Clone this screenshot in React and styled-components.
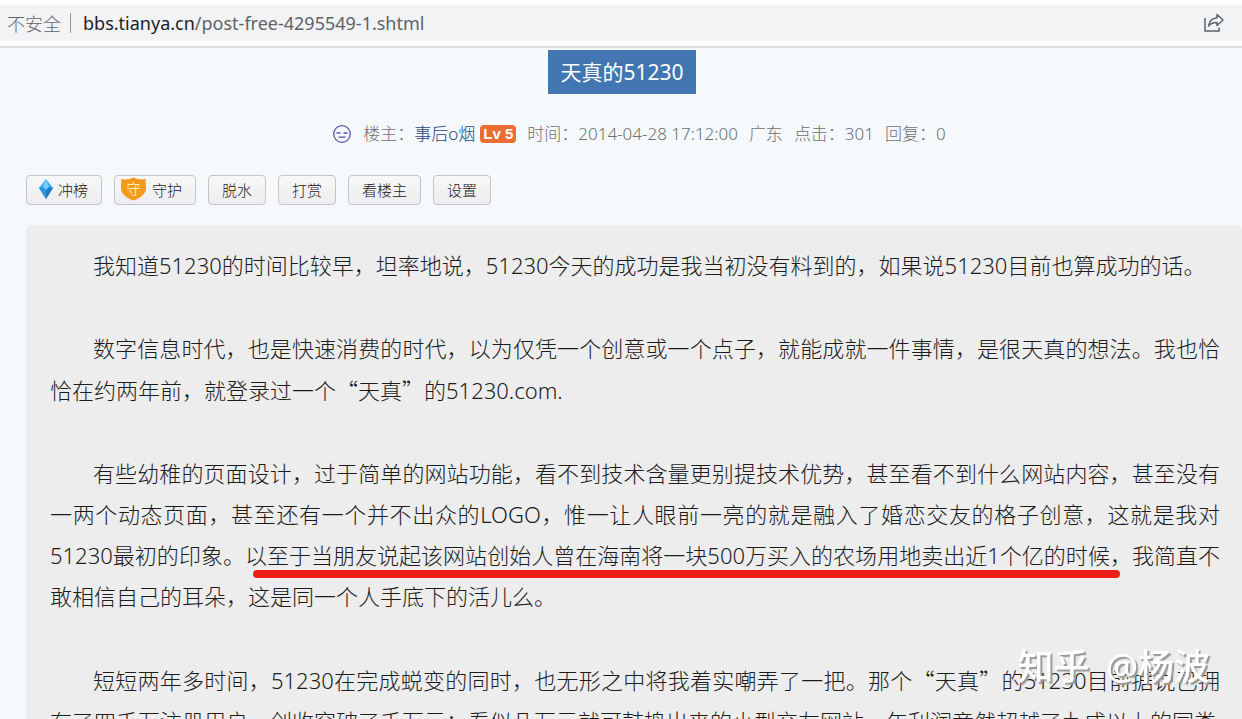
import styled, { createGlobalStyle } from 'styled-components';

const App = () => {
    return (
        <>
            <GlobalStyle />
            <AddressBar>
                <Security>不安全</Security>
                <Divider />
                <Url href='#'>
                    <Host>bbs.tianya.cn</Host>/post-free-4295549-1.shtml
                </Url>
                <ShareBtn aria-label='分享'>
                    <ShareIcon />
                </ShareBtn>
            </AddressBar>

            <Main>
                <Title>天真的51230</Title>

                <PostInfo>
                    <FaceIcon />
                    <Author>
                        楼主：<AuthorLink href='#'>事后o烟</AuthorLink>
                        <Level>Lv 5</Level>
                    </Author>
                    <span>时间：2014-04-28 17:12:00</span>
                    <span>广东</span>
                    <span>点击：301</span>
                    <span>回复：0</span>
                </PostInfo>

                <Toolbar>
                    <ToolBtn $left={12}>
                        <DiamondIcon />
                        冲榜
                    </ToolBtn>
                    <ToolBtn $left={5}>
                        <ShieldIcon />
                        守护
                    </ToolBtn>
                    <ToolBtn>脱水</ToolBtn>
                    <ToolBtn>打赏</ToolBtn>
                    <ToolBtn>看楼主</ToolBtn>
                    <ToolBtn>设置</ToolBtn>
                </Toolbar>

                <Post>
                    <Paragraph>
                        我知道51230的时间比较早，坦率地说，51230今天的成功是我当初没有料到的，如果说51230目前也算成功的话。
                    </Paragraph>
                    <Paragraph>
                        数字信息时代，也是快速消费的时代，以为仅凭一个创意或一个点子，就能成就一件事情，是很天真的想法。我也恰恰在约两年前，就登录过一个<Quote>“天真”</Quote>的51230.com.
                    </Paragraph>
                    <Paragraph>
                        有些幼稚的页面设计，过于简单的网站功能，看不到技术含量更别提技术优势，甚至看不到什么网站内容，甚至没有一两个动态页面，甚至还有一个并不出众的LOGO，惟一让人眼前一亮的就是融入了婚恋交友的格子创意，这就是我对51230最初的印象。
                        <Marked>以至于当朋友说起该网站创始人曾在海南将一块500万买入的农场用地卖出近1个亿的时候，</Marked>
                        我简直不敢相信自己的耳朵，这是同一个人手底下的活儿么。
                    </Paragraph>
                    <Paragraph>
                        短短两年多时间，51230在完成蜕变的同时，也无形之中将我着实嘲弄了一把。那个<Quote>“天真”</Quote>的51230目前据说已拥有了四千万注册用户，创收突破了千万元；看似几万元就可鼓捣出来的小型交友网站，年利润竟然超越了九成以上的同类
                    </Paragraph>
                </Post>
            </Main>

            <Watermark>
                <span>知乎</span>
                <span>@杨波</span>
            </Watermark>
        </>
    );
};

export default App;

const ShareIcon = () => (
    <svg width='22' height='20' viewBox='0 0 22 20' fill='none' stroke='#5f6368' strokeWidth='1.5'>
        <path d='M2 5V18H16V14.5' />
        <path d='M14 1.5L20 7L14 12.5V9.5C10.5 9.3 8 10.3 5.5 13C6.2 8.5 9 5.3 14 4.7Z' strokeLinejoin='round' />
    </svg>
);

const FaceIcon = () => (
    <svg width='20' height='20' viewBox='0 0 20 20' fill='none' stroke='#5753ab' strokeWidth='1.3'>
        <circle cx='10' cy='10' r='8.3' />
        <path d='M4.5 9H8.5M11.5 9H15.5M6.5 13.2H13.5' />
    </svg>
);

const DiamondIcon = () => (
    <svg width='14' height='20' viewBox='0 0 14 20'>
        <path d='M7 0L14 9L7 20L0 9Z' fill='#3aaeee' />
        <path d='M7 0L10 8L7 11L4 8Z' fill='#74cdf8' />
        <path d='M0 9L4 8L7 11V20Z' fill='#2c93dc' />
        <path d='M14 9L10 8L7 11V20Z' fill='#1d7bc8' />
    </svg>
);

const ShieldIcon = () => (
    <svg width='27' height='24' viewBox='0 0 27 24'>
        <path
            d='M13.5 0.5C10 2.5 5 3 1 2C2 5 0.5 8 1 12C1.7 18 8 21.5 13.5 23.5C19 21.5 25.3 18 26 12C26.5 8 25 5 26 2C22 3 17 2.5 13.5 0.5Z'
            fill='#f39a1d'
        />
        <ShieldText x='13.5' y='17' textAnchor='middle'>
            守
        </ShieldText>
    </svg>
);

const GlobalStyle = createGlobalStyle`
    html {
        scrollbar-width: none;
    }

    body {
        margin: 0;
        height: 100vh;
        overflow: hidden;
        background: #f5f9fb;
        font-family: 'Noto Sans', 'Noto Sans CJK SC', sans-serif;
    }
`;

const AddressBar = styled.header`
    display: flex;
    align-items: center;
    height: 36px;
    padding: 0 17px 0 7px;
    border-top: 5px solid #fdfdfe;
    background: #f1f3f4;
    box-shadow: 0 5px 0 #fdfdfe, 0 7px 0 #dedfe2;
    font-size: 18px;
    color: #5f6368;
`;

const Security = styled.span`
    font-weight: 300;
`;

const Divider = styled.span`
    width: 1px;
    height: 20px;
    margin: 0 12px 0 9px;
    background: #94979b;
`;

const Url = styled.a`
    flex: 1;
    color: #5f6368;
    text-decoration: none;
`;

const Host = styled.span`
    color: #202124;
`;

const ShareBtn = styled.button`
    display: flex;
    padding: 0;
    border: none;
    background: none;
`;

const Main = styled.main`
    display: flex;
    flex-direction: column;
    margin-top: 9px;
    padding-left: 26px;
`;

const Title = styled.h1`
    align-self: center;
    margin: 0 24px 0 0;
    padding: 0 12px;
    background: #4276b0;
    color: #fff;
    font-size: 21px;
    font-weight: 400;
    line-height: 44px;
`;

const PostInfo = styled.div`
    display: flex;
    justify-content: center;
    align-items: center;
    gap: 11px;
    margin-top: 28px;
    padding-left: 10px;
    color: #707070;
    font-size: 17px;
    font-weight: 300;
    line-height: 24px;
`;

const Author = styled.span`
    display: flex;
    align-items: center;
`;

const AuthorLink = styled.a`
    color: #1f477d;
    text-decoration: none;
`;

const Level = styled.span`
    margin-left: 5px;
    padding: 0 3px;
    border-radius: 4px;
    background: #ec6d32;
    color: #fff;
    font-family: 'Liberation Sans', sans-serif;
    font-size: 15px;
    font-weight: 700;
    line-height: 18px;
`;

const Toolbar = styled.div`
    display: flex;
    gap: 12px;
    margin-top: 29px;
`;

const ToolBtn = styled.button`
    display: flex;
    align-items: center;
    gap: 5px;
    height: 30px;
    padding: 0 13px 2px ${({ $left }) => $left ?? 13}px;
    border: 1px solid #c3c5c7;
    border-radius: 4px;
    background: linear-gradient(#f8f8f8, #eeecee);
    color: #222;
    font-family: inherit;
    font-size: 15px;
    font-weight: 300;
`;

const ShieldText = styled.text`
    fill: #ffe9a8;
    font-size: 14px;
    font-weight: 400;
`;

const Post = styled.article`
    margin-top: 20px;
    padding: 20px 22px 20px 24px;
    border-radius: 6px;
    background: #ededed;
    color: #1c1c1c;
    font-size: 22px;
    font-weight: 300;
    line-height: 41px;
`;

const Paragraph = styled.p`
    margin: 0 0 42px;
    text-align: justify;
    text-indent: 43px;
`;

const Quote = styled.span`
    font-family: 'Noto Sans CJK SC', sans-serif;
`;

const Marked = styled.span`
    position: relative;

    &::after {
        content: '';
        position: absolute;
        right: 12px;
        bottom: -8px;
        left: 8px;
        height: 8px;
        border-radius: 4px;
        background: #ee1f16;
    }
`;

const Watermark = styled.div`
    position: fixed;
    right: 32px;
    bottom: 28px;
    display: flex;
    gap: 16px;
    color: #fff;
    font-size: 36px;
    font-weight: 500;
    line-height: 48px;
    text-shadow: 2px 2px 1px #999;
`;
